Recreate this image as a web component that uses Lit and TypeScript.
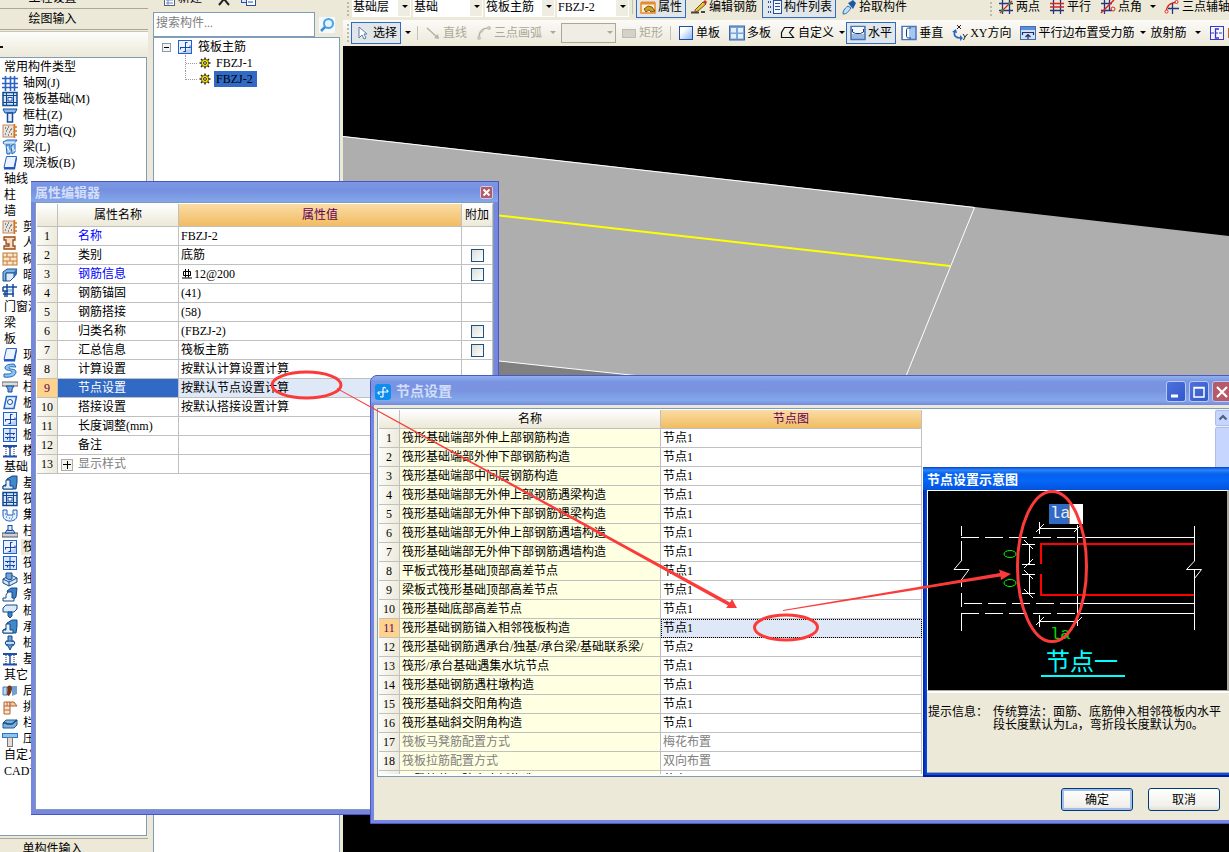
import { LitElement, html, svg, css, nothing } from "lit";
import { customElement, property } from "lit/decorators.js";
import { classMap } from "lit/directives/class-map.js";

/* 16x16 glyphs used by the toolbars and the component trees. */
const ICONS: Record<string, unknown> = {
  grid: svg`<path d="M0 3.500h16M0 8.500h16M0 12.500h16M3.500 1v15M8.500 1v15M12.500 1v15" stroke="#2a63c4" stroke-width="1.600" fill="none"/>`,
  raft: svg`<rect x="1" y="1.500" width="14" height="13" fill="#d6e6fa" stroke="#10488e" stroke-width="1.500"/><path d="M1 4.500h14M1 11.500h14M4.500 2v13M11.500 2v13" stroke="#10488e"/><rect x="6" y="6.500" width="4" height="3.500" fill="#fff" stroke="#1c4fb0"/>`,
  column: svg`<path d="M1 2h14l-2 4H3z" fill="#8db9ee" stroke="#164a9e"/><path d="M5.500 6h5v9h-5z" fill="#e6f1ff" stroke="#164a9e" stroke-width="1.500"/>`,
  wall: svg`<rect x="1" y="2" width="11" height="12" fill="#e6e2de" stroke="#c98a5c"/><path d="M3 5h1M6 4h1M9 6h1M4 8h1M7 9h1M3 11h1M9 11h1M6 12h1M5 6h1M8 7h1" stroke="#333"/><path d="M12.500 1v14M12 4h3M12 8h3M12 12h3" stroke="#d8741c" stroke-width="1.500"/>`,
  beam: svg`<path d="M1 3l4-2h10l-3 4H2zM4 6l4 0v9H5zM9 7l4-3v9l-3 2z" fill="#a9cdf5" stroke="#1d69ba"/><path d="M2 4l12 0M5 8l3 5M10 8l3 4" stroke="#fff"/>`,
  slab: svg`<path d="M4.500 1.500h10l-2.500 11h-10z" fill="#eaf3ff" stroke="#2a66c8"/><path d="M2 12.500h10l2.500-11 .5 2-2 11H2z" fill="#1d55b8"/>`,
  frame: svg`<path d="M2 2h11v3h-2v6h2v3H2v-3h5V9H4V5H2z" fill="#f5dfca" stroke="#9c4a12" stroke-width="1.300"/>`,
  brick: svg`<rect x="1" y="2" width="14" height="12" fill="#fbe5cd" stroke="#c47a35"/><path d="M1 6h14M1 10h14M5 2v4M11 2v4M8 6v4M5 10v4M11 10v4" stroke="#c47a35"/>`,
  hidden: svg`<path d="M1 5l4-3h10l-3 4H4v8H1z" fill="#7fb2e6" stroke="#1b528e"/><path d="M4 6h8v4l-4 4H4z" fill="#dcecfb" stroke="#1b528e"/><path d="M12 6l3-4v5l-3 4z" fill="#2d6db2"/>`,
  tie: svg`<path d="M1 4h14M1 11h11M5 1v13M11 1v13M1 4v4h9M3 14V8" stroke="#174a9b" stroke-width="1.500" fill="none"/><path d="M6 6h4v3H6z" fill="#9ccaf2"/>`,
  spiral: svg`<path d="M12 1C7 1 3 2 3 5s7 2 7 4-4 2-8 2v3c6 1 12-1 12-5S7 7 7 5s3-1 7-1z" fill="#8fc3ee" stroke="#1d69b8"/>`,
  cap: svg`<path d="M0 3h16v4H0z" fill="#ddd" stroke="#666"/><path d="M4 7h8l-2 3v3H6v-3z" fill="#6ea7e4" stroke="#174a9b"/>`,
  hole: svg`<path d="M4.500 1.500h10l-2.500 12h-10z" fill="#e1eefc" stroke="#2a66c8" stroke-width="1.500"/><circle cx="8" cy="7" r="2.500" fill="#fff" stroke="#174a9b"/>`,
  rebar: svg`<rect x="1.500" y="1.500" width="13" height="13" fill="#eaf2ff" stroke="#1f5fd0"/><path d="M14 9v5H2z" fill="#b8d0f4"/><path d="M3 8.500h10.500M8.500 3v10M8.500 3.500h2M6.500 12.500h2M3.500 8v2.500M13 9V6.500" stroke="#1546a8" fill="none"/>`,
  neg: svg`<rect x="1.500" y="1.500" width="13" height="13" fill="#d8e7fb" stroke="#1f5fd0"/><path d="M8 2v12.500M3 6.500h10M3 10.500h10M5.500 6v2M11.500 6v2M5.500 10.500v2M11.500 10.500v2" stroke="#1546a8" fill="none"/>`,
  band: svg`<path d="M1 3h14M1 13.500h14" stroke="#1c4fb0" stroke-width="2"/><path d="M4 4v9M12 4v9" stroke="#222" stroke-dasharray="1 1"/><path d="M8 4v9M6 4h4" stroke="#1c4fb0" stroke-width="1.500"/>`,
  found: svg`<path d="M1 14V11l4-2V4l5-3h5v6l-1 7z" fill="#4287c9" stroke="#124a86"/><path d="M1 14v-3h3V5h4v6h3v3z" fill="#e4f1fd" stroke="#124a86"/>`,
  pit: svg`<path d="M1 3h4v5h6V3h4v5c0 4-3 6-7 6S1 12 1 8z" fill="#e3f0ff" stroke="#1d5ac0"/><path d="M3 7h1M4 10h1M7 11h1M10 10h1M12 7h1M9 12h1" stroke="#1d5ac0"/>`,
  pier: svg`<path d="M0 10h16v4H0z" fill="#cfcfcf" stroke="#555"/><path d="M3 10l2-3h6l2 3z" fill="#b6d4f4" stroke="#174a9b"/><rect x="6" y="2.500" width="4" height="5" fill="#dcebfb" stroke="#174a9b"/>`,
  pad: svg`<path d="M1 8l8-4 6 3v4l-8 4-6-3z" fill="#d5e8fa" stroke="#174a86"/><path d="M1 8l6 3 8-4M7 11v4" stroke="#174a86" fill="none"/><path d="M4 2h6v6l-3 1-3-2z" fill="#6ea4dc" stroke="#174a86"/>`,
  strip: svg`<path d="M5 4l4-3h6l-1 9-4 4z" fill="#3b7fc4" stroke="#124a86"/><path d="M1 14v-3h3V8l2-3h4v6h2v3z" fill="#f0f7ff" stroke="#124a86"/>`,
  pilecap: svg`<path d="M1 5l3-3h11v4l-3 3H1z" fill="#d9e9f9" stroke="#174a86"/><path d="M6 9h4v4l-2 2-2-2z" fill="#3c83cc" stroke="#174a86"/>`,
  pile: svg`<path d="M6 1h4v5h2v4l-2 1-2 4-2-4-2-1V6h2z" fill="#6aa1da" stroke="#174a86"/><ellipse cx="8" cy="8" rx="5" ry="2" fill="#bcd9f5" stroke="#174a86"/>`,
  post: svg`<path d="M1 4h4v8H1z" fill="#b9d5f0" stroke="#4d7fb4"/><path d="M5 4c2-2 5-2 5 1s-1 5-3 8l-2-1c0-3 1-5 0-8z" fill="#743715"/><path d="M10 3h5v8l-5 2z" fill="#6fa0d3"/>`,
  eave: svg`<path d="M2 3h6v12H2z" fill="#fbe3cf" stroke="#b5622a"/><path d="M8 3h4l3 4H8zM2 7h6M2 11h6M5 3v4" fill="#ecc5a4" stroke="#b5622a"/>`,
  rail: svg`<path d="M1 8l3-3h11v5l-3 3H1z" fill="#7fb0dc" stroke="#1b5c99"/><path d="M1 8h3l1 1h5l5-4" stroke="#124a80" fill="none" stroke-width="1.500"/>`,
  coping: svg`<rect x="0.500" y="2.500" width="15" height="4" fill="#8cc2f4" stroke="#2577c8"/><rect x="5.500" y="6.500" width="5" height="9" fill="#ddd" stroke="#777"/>`,
  gear: svg`<g stroke="#222" stroke-width="1.500"><path d="M8 2.500v11M2.500 8h11M4 4l8 8M12 4l-8 8"/></g><circle cx="8" cy="8" r="3.700" fill="#ffe600" stroke="#6b5f00"/><circle cx="8" cy="8" r="1.400" fill="#fff" stroke="#222"/>`,
  search: svg`<rect width="16" height="16" fill="#f4f9fd"/><circle cx="9.500" cy="6.500" r="4.500" fill="#e2f4ff" stroke="#4aa3e2" stroke-width="2"/><path d="M6 10l-4 4" stroke="#3f8fd0" stroke-width="2.500"/>`,
  sheet: svg`<rect x="3.500" y="0.500" width="10" height="15" fill="#fff" stroke="#555f80"/><path d="M5 10h7M5 13h7M7 8v7" stroke="#6a87c0"/>`,
  cross: svg`<path d="M3 3l10 12M13 3L3 15" stroke="#222" stroke-width="2"/>`,
  copy: svg`<rect x="1.500" y="3.500" width="8" height="9" fill="#dbe8fb" stroke="#2b4fa0"/><rect x="6.500" y="6.500" width="9" height="9" fill="#fff" stroke="#2b4fa0"/><path d="M8 9h5M8 12h5" stroke="#2b4fa0"/>`,
  props: svg`<rect x="1" y="4" width="14" height="10" fill="#fff1d6" stroke="#e8892b" stroke-width="1.500"/><path d="M1 4h14" stroke="#e8892b" stroke-width="3"/><path d="M4 10l4-3 4 1 3 4-4 1-2-2-3 2z" fill="#d2a01e" stroke="#553d05" stroke-width=".8"/>`,
  pencil: svg`<path d="M0 13.500h8M10 13h4" stroke="#444" stroke-width="2"/><path d="M4 11l8-8 3 2-8 7-3 1z" fill="#e8c33c" stroke="#6d5312"/><path d="M12 3l2-2 2 2-1 2z" fill="#c8311d"/>`,
  list: svg`<path d="M2 3h3M2 8h3M2 13h3" stroke="#2b4fa0" stroke-width="2" stroke-dasharray="1 1"/><rect x="7.500" y="1.500" width="8" height="13" fill="#f5f8ff" stroke="#2b4fa0"/><path d="M9 4.500h5M9 7.500h5M9 10.500h5" stroke="#2b4fa0"/>`,
  picker: svg`<path d="M2 15c0-3 1-5 5-8l3 2c-3 4-4 6-8 6z" fill="#bde0fa" stroke="#2a68a8"/><path d="M7 4l5 6 1-2 2-4-3-3-3 2z" fill="#195aa6"/>`,
  axis2: svg`<path d="M1 4.500h14M1 11.500h14M4.500 1v14M11.500 1v14" stroke="#26367e" stroke-width="1.300"/><path d="M2 14L14 2" stroke="#d22" stroke-width="1.300"/><circle cx="4.500" cy="11.500" r="1.500" fill="#3b8c2f"/><circle cx="11.500" cy="4.500" r="1.500" fill="#3b8c2f"/>`,
  axisP: svg`<path d="M4.500 1v14M11.500 1v14M1 11.500h14" stroke="#26367e" stroke-width="1.300"/><path d="M1 4.500h14M1 8h14" stroke="#d22" stroke-width="1.300"/>`,
  axisA: svg`<path d="M1 4.500h11M1 11.500h11M4.500 1v14M9.500 1v10" stroke="#26367e" stroke-width="1.300"/><path d="M1 14L14 1" stroke="#d22" stroke-width="1.500"/><circle cx="13" cy="10" r="2" fill="none" stroke="#d22"/>`,
  axis3: svg`<path d="M2 13C3 6 6 4 13 3" stroke="#d22" fill="none" stroke-width="1.300"/><path d="M8.500 4v11M4 9.500h11" stroke="#26367e" stroke-width="1.300"/><circle cx="2.500" cy="12.500" r="1.500" fill="#fff" stroke="#d22"/><circle cx="12.500" cy="3" r="1.500" fill="#fff" stroke="#d22"/>`,
  cursor: svg`<path d="M4 2v11l3-3 2 4 2-1-2-4h3z" fill="#fff" stroke="#5c7ca8"/>`,
  line: svg`<path d="M2 3l10 9" stroke="#b6b3a6" stroke-width="1.500"/><path d="M14 14l-5-1 4-4z" fill="#b6b3a6"/>`,
  arc: svg`<path d="M3 13C3 7 6 3 13 3" stroke="#b6b3a6" fill="none" stroke-width="1.500"/><circle cx="3" cy="13" r="2" fill="#c9c6ba"/><circle cx="13" cy="3" r="2" fill="#c9c6ba"/><circle cx="6" cy="6" r="1.500" fill="#c9c6ba"/>`,
  rect: svg`<rect x="1.500" y="4.500" width="13" height="8" fill="#d4d2c8" stroke="#c0bdb0"/>`,
  single: svg`<defs><linearGradient id="s" x2="1" y2="1"><stop offset=".3" stop-color="#fff"/><stop offset="1" stop-color="#7fb0f8"/></linearGradient></defs><rect x="1.500" y="1.500" width="13" height="13" fill="url(#s)" stroke="#1f4fa6"/>`,
  multi: svg`<rect x="0.500" y="1" width="15" height="14" fill="#7da6d6" stroke="#3c6aa4"/><path d="M2 3h5v4.500H2zM9 3h5v4.500H9zM2 9h5v4.500H2zM9 9h5v4.500H9z" fill="#e3f0fc"/>`,
  poly: svg`<path d="M1.500 12.500v-5l3-5h9l-4 5 4 5z" fill="none" stroke="#111" stroke-width="1.200"/>`,
  horiz: svg`<rect x="1" y="1.500" width="14" height="13" fill="#9cbce8" stroke="#4b76b8" stroke-width="1.500"/><rect x="2" y="2" width="12" height="7" fill="#f4f8fd"/><path d="M2.500 4v3l3 1.500h5l3-1.500V4" stroke="#223c70" fill="none"/>`,
  vert: svg`<rect x="1" y="1.500" width="14" height="13" fill="#a6c6f0" stroke="#4b76b8" stroke-width="1.500"/><rect x="2" y="2" width="6" height="12" fill="#f8fbff"/><path d="M10 3C6 3 5.500 3 5.500 6v4c0 3 .5 3 4.500 3" stroke="#1a3a7a" fill="none"/>`,
  xy: svg`<path d="M5 0l4 4M9 0L5 4M11 9l2 3L15.500 9M13 12l-1.500 3" stroke="#222" fill="none"/><path d="M3 6C1 11 4 13 9 13" fill="none" stroke="#2a66c8" stroke-width="1.700"/><path d="M0 7l4-3 1 4zM8 10l3 3-3 3z" fill="#2a66c8"/>`,
  edge: svg`<rect x="0.500" y="1.500" width="15" height="13" fill="#cfe0f7" stroke="#3f6fb8"/><rect x="1" y="2" width="14" height="3" fill="#5c8fd8"/><path d="M2.500 10V7.500h11V10M8 14V10M5.500 12L8 9.500l2.500 2.500" stroke="#222f66" fill="none" stroke-width="1.200"/>`,
  auto: svg`<rect x="1.500" y="1.500" width="13" height="13" fill="#f5f4ff" stroke="#3a36c8"/><path d="M2 8h12" stroke="#3a36c8" stroke-dasharray="3 1"/><path d="M10 4H6.500v9H10" stroke="#3a36c8" fill="none" stroke-width="1.300"/>`,
};

const icon = (name: string) => svg`<svg class="icon" viewBox="0 0 16 16" width="16" height="16" aria-hidden="true">${ICONS[name]}</svg>`;
const caret = (off = false) => html`<svg class="caret" viewBox="0 0 12 6" width="12" height="6" aria-hidden="true"><path d="M3 1h6L6 4z" fill=${off ? "#aca899" : "#000"} /></svg>`;

const base = css`
  :host { font: 12px/16px "Liberation Serif", "Noto Sans CJK SC", serif; color: #000; }
  * { box-sizing: border-box; }
  button, input, select { font: inherit; color: inherit; margin: 0; border-radius: 0; }
  .icon, .caret { display: block; flex: none; }
`;

const gridStyles = css`
  table { border-collapse: separate; border-spacing: 0; table-layout: fixed; }
  th, td { padding: 0; font-weight: normal; border: solid #c0c0c0; border-width: 0 1px 1px 0; overflow: hidden; white-space: nowrap; }
  tr { height: 19px; }
  th { background: linear-gradient(#fff, #f3f1e7 60%, #ece9d8); text-align: center; }
  tbody th { background: linear-gradient(100deg, #fdfdfb, #ece9d8); }
  th.hot { background: linear-gradient(#fadca4, #f1bc62); color: #600060; }
  tbody th.hot { background: #ffd38c; }
  td { padding-left: 2px; background: #fff; line-height: 17px; }
`;

/* ---------- Toolbars ---------- */
interface Tool { t: "btn" | "combo" | "sep" | "grip" | "caret" | "space"; icon?: string; label?: string; on?: boolean; off?: boolean; tight?: boolean; size?: string; name?: string; }

const TOP_TOOLS: Tool[] = [
  { t: "grip" },
  { t: "combo", label: "基础层", size: "s", name: "楼层" },
  { t: "combo", label: "基础", size: "m", name: "构件大类" },
  { t: "combo", label: "筏板主筋", size: "m", name: "构件类型" },
  { t: "combo", label: "FBZJ-2", size: "l", name: "构件" },
  { t: "sep" },
  { t: "btn", icon: "props", label: "属性", on: true },
  { t: "btn", icon: "pencil", label: "编辑钢筋" },
  { t: "btn", icon: "list", label: "构件列表", on: true },
  { t: "btn", icon: "picker", label: "拾取构件" },
  { t: "space" },
  { t: "grip" },
  { t: "btn", icon: "axis2", label: "两点" },
  { t: "btn", icon: "axisP", label: "平行" },
  { t: "btn", icon: "axisA", label: "点角" },
  { t: "caret" },
  { t: "btn", icon: "axis3", label: "三点辅轴" },
];

const DRAW_TOOLS: Tool[] = [
  { t: "grip" },
  { t: "btn", icon: "cursor", label: "选择", on: true },
  { t: "caret" },
  { t: "sep" },
  { t: "btn", icon: "line", label: "直线", off: true },
  { t: "btn", icon: "arc", label: "三点画弧", off: true },
  { t: "caret", off: true },
  { t: "combo", label: "", size: "x", off: true, name: "画弧方式" },
  { t: "btn", icon: "rect", label: "矩形", off: true },
  { t: "sep" },
  { t: "btn", icon: "single", label: "单板" },
  { t: "btn", icon: "multi", label: "多板" },
  { t: "btn", icon: "poly", label: "自定义" },
  { t: "caret", tight: true },
  { t: "btn", icon: "horiz", label: "水平", on: true },
  { t: "btn", icon: "vert", label: "垂直" },
  { t: "btn", icon: "xy", label: "XY方向" },
  { t: "btn", icon: "edge", label: "平行边布置受力筋" },
  { t: "caret", tight: true },
  { t: "btn", label: "放射筋" },
  { t: "caret" },
  { t: "btn", icon: "auto", label: "自动配筋" },
];

@customElement("tool-strip")
class ToolStrip extends LitElement {
  @property({ attribute: false }) tools: Tool[] = [];
  static styles = [base, css`
    :host { display: flex; gap: 1px; overflow: hidden; padding: 0 0 2px 4px; align-items: flex-end; background: linear-gradient(#fcfbf8, #f3f1e8 50%, #ece9d8); }
    .tool { flex: none; display: flex; align-items: center; gap: 2px; height: 22px; padding: 0 3px; border: 1px solid transparent; background: none; white-space: nowrap; }
    .tool.on { border-color: #316ac5; background: #e1e6e8; }
    .tool:disabled { color: #aca899; }
    .drop { flex: none; display: flex; align-items: center; justify-content: center; height: 22px; width: 12px; padding: 0; border: 0; background: none; }
    .drop.tight { margin: 0 -3px; }
    .sep { flex: none; width: 1px; height: 14px; margin: 4px 2px; background: #c5c2b2; }
    .grip { flex: none; width: 2px; height: 18px; margin: 2px 1px 2px 0; background: repeating-linear-gradient(#bdb9a8 0 2px, transparent 2px 4px); }
    .space { flex: none; width: 77px; height: 22px; }
    .combo { flex: none; position: relative; height: 20px; width: 70px; margin: 0 0 1px 1px; }
    .combo.s { width: 59px; }
    .combo.l { width: 72px; }
    .combo.x { width: 55px; }
    .combo select { appearance: none; width: 100%; height: 100%; padding: 0 12px 0 0; border: 1px solid #fff; background: linear-gradient(to left, #efede2 12px, #fff 12px); }
    .combo.x select { border-color: #aca899; background: #f0eee4; opacity: 1; }
    .combo .caret { position: absolute; right: 0; top: 7px; pointer-events: none; }
  `];
  render() {
    return this.tools.map((x) => {
      switch (x.t) {
        case "btn": return html`<button class=${classMap({ tool: true, on: !!x.on })} ?disabled=${!!x.off}>${x.icon ? icon(x.icon) : nothing}<span>${x.label}</span></button>`;
        case "caret": return html`<button class=${classMap({ drop: true, tight: !!x.tight })} aria-label="更多" ?disabled=${!!x.off}>${caret(x.off)}</button>`;
        case "combo": return html`<label class="combo ${x.size}"><select aria-label=${x.name} ?disabled=${!!x.off}><option>${x.label}</option></select>${caret(x.off)}</label>`;
        default: return html`<span class=${x.t}></span>`;
      }
    });
  }
}

/* ---------- Left navigation ---------- */
const NAV: [string, string?][] = [
  ["常用构件类型"], ["轴网(J)", "grid"], ["筏板基础(M)", "raft"], ["框柱(Z)", "column"], ["剪力墙(Q)", "wall"], ["梁(L)", "beam"], ["现浇板(B)", "slab"],
  ["轴线"], ["柱"], ["墙"], ["剪力墙(Q)", "wall"], ["人防门框墙(RF)", "frame"], ["砌体墙(Q)", "brick"], ["暗梁(A)", "hidden"], ["砌体加筋(Y)", "tie"],
  ["门窗洞"], ["梁"], ["板"], ["现浇板(B)", "slab"], ["螺旋板(B)", "spiral"], ["柱帽(V)", "cap"], ["板洞(N)", "hole"], ["板受力筋(S)", "rebar"], ["板负筋(F)", "neg"], ["楼层板带(H)", "band"],
  ["基础"], ["基础梁(F)", "found"], ["筏板基础(M)", "raft"], ["集水坑(K)", "pit"], ["柱墩(Y)", "pier"], ["筏板主筋(R)", "rebar"], ["筏板负筋(X)", "neg"], ["独立基础(P)", "pad"], ["条形基础(T)", "strip"], ["桩承台(V)", "pilecap"], ["承台梁(F)", "found"], ["桩(U)", "pile"], ["基础板带(W)", "band"],
  ["其它"], ["后浇带(JD)", "post"], ["挑檐(T)", "eave"], ["栏板(K)", "rail"], ["压顶(YD)", "coping"], ["自定义"], ["CAD识别"],
];

@customElement("module-nav")
class ModuleNav extends LitElement {
  static styles = [base, css`
    :host { display: flex; flex-direction: column; background: #ece9d8; overflow: hidden; }
    .clip { flex: none; display: flex; align-items: flex-end; overflow: hidden; height: 9px; }
    .foot { align-items: flex-start; height: 14px; margin-top: 2px; }
    .section { flex: none; width: 100%; height: 21px; padding: 0 43px 0 0; border: 0; border-bottom: 1px solid #aca899; background: #ece9d8; }
    .foot .section { border-top: 1px solid #aca899; }
    .strip { flex: none; height: 26px; margin-top: 1px; background: linear-gradient(#fdfdfb, #ece9d8); border-top: 1px solid #c8c5b4; display: flex; align-items: center; }
    .strip i { width: 3px; height: 2px; background: #111; margin-top: 4px; }
    ul { flex: 1; min-height: 0; overflow: hidden; margin: 0 1px 0 0; padding: 1px 0 0; list-style: none; background: #fff; border: solid #7f9db9; border-width: 1px 1px 1px 0; }
    li { display: flex; align-items: center; gap: 3px; height: 16px; padding-left: 4px; white-space: nowrap; }
    li.leaf { padding-left: 2px; }
    li span { padding: 0 2px; }
    li.group span { padding: 0; }
    li.now span { background: #ece9d8; }
  `];
  render() {
    return html`
      <div class="clip"><button class="section">工程设置</button></div>
      <button class="section">绘图输入</button>
      <div class="strip"><i></i></div>
      <ul>${NAV.map(([name, ic], i) => html`<li class=${classMap({ leaf: !!ic, group: !ic, now: i === 30 })}>${ic ? icon(ic) : nothing}<span>${name}</span></li>`)}</ul>
      <div class="clip foot"><button class="section">单构件输入</button></div>`;
  }
}

/* ---------- Component list ---------- */
@customElement("component-list")
class ComponentList extends LitElement {
  static styles = [base, css`
    :host { display: flex; flex-direction: column; background: #ece9d8; overflow: hidden; }
    .bar { flex: none; display: flex; align-items: flex-end; height: 12px; overflow: hidden; padding: 0 0 3px 8px; }
    .bar button { flex: none; display: flex; align-items: center; height: 22px; gap: 1px; padding: 0; margin-right: 14px; border: 0; background: none; }
    .bar button + button { margin-right: 8px; }
    .find { flex: none; display: flex; height: 25px; }
    .find input { flex: 1; min-width: 0; border: 1px solid #7f9db9; background: #fff; padding: 0 2px 3px; }
    .find input::placeholder { color: #808080; opacity: 1; }
    .find button { width: 25px; padding: 0 0 0 4px; border: 0; background: none; }
    .tree { flex: 1; border: 1px solid #7f9db9; border-bottom: 0; background: #fff; padding: 1px 0 0 8px; }
    .row { display: flex; align-items: center; height: 16px; }
    .row .icon { margin-right: 5px; }
    .fold { display: block; width: 9px; height: 9px; padding: 0; margin-right: 6px; border: 1px solid #7f9db9; background: linear-gradient(#000, #000) center / 5px 1px no-repeat #f5f3ea; }
    .kids { margin-left: 23px; }
    .kids .row::before { content: ""; width: 11px; height: 16px; border-left: 1px dotted #999; background: repeating-linear-gradient(90deg, #999 0 1px, transparent 1px 2px) 0 8px / 100% 1px no-repeat; }
    .kids .row:last-child::before { height: 9px; align-self: flex-start; }
    .kids .row .icon { margin-right: 1px; }
    .name { padding: 0 4px 0 2px; }
    .name.on { background: #316ac5; }
  `];
  render() {
    return html`
      <div class="bar"><button>${icon("sheet")}新建</button><button aria-label="删除">${icon("cross")}</button><button aria-label="复制">${icon("copy")}</button></div>
      <div class="find"><input aria-label="搜索构件" placeholder="搜索构件..." /><button aria-label="搜索">${icon("search")}</button></div>
      <div class="tree">
        <div class="row"><button class="fold" aria-label="折叠"></button>${icon("rebar")}<span>筏板主筋</span></div>
        <div class="kids">
          <div class="row">${icon("gear")}<span class="name">FBZJ-1</span></div>
          <div class="row">${icon("gear")}<span class="name on">FBZJ-2</span></div>
        </div>
      </div>`;
  }
}

/* ---------- Property editor ---------- */
const rebarMark = html`<svg class="mark" viewBox="0 0 10 10" width="10" height="10" aria-hidden="true"><path d="M1.500 2.500h7v4h-7zM3.500 0v8.500M6.500 0v8.500M0 9h10" fill="none" stroke="#000" /></svg>`;
const PROPS: { n: string; v: unknown; c?: "blue" | "grey"; box?: boolean }[] = [
  { n: "名称", v: "FBZJ-2", c: "blue" },
  { n: "类别", v: "底筋", box: true },
  { n: "钢筋信息", v: html`${rebarMark}12@200`, c: "blue", box: true },
  { n: "钢筋锚固", v: "(41)" },
  { n: "钢筋搭接", v: "(58)" },
  { n: "归类名称", v: "(FBZJ-2)", box: true },
  { n: "汇总信息", v: "筏板主筋", box: true },
  { n: "计算设置", v: "按默认计算设置计算" },
  { n: "节点设置", v: "按默认节点设置计算" },
  { n: "搭接设置", v: "按默认搭接设置计算" },
  { n: "长度调整(mm)", v: "" },
  { n: "备注", v: "" },
  { n: "显示样式", v: "", c: "grey" },
];

@customElement("property-editor")
class PropertyEditor extends LitElement {
  static styles = [base, gridStyles, css`
    :host { display: flex; flex-direction: column; padding: 0 4px 4px; border: 1px solid #4a54c4; border-width: 1px 1px 1px 0; background: #7587de; }
    header { flex: none; display: flex; align-items: center; justify-content: space-between; height: 20px; margin: 0 -4px; padding: 1px 5px 0 4px; font-size: 13px; font-weight: bold; color: #d3defa; background: linear-gradient(#7b98e4, #7690e0 40%, #83a6ea); }
    .x { display: block; width: 13px; height: 13px; padding: 0; border: 1px solid #d9c6d6; border-radius: 2px; background: #b35a6a; }
    .x svg { display: block; }
    .sheet { flex: 1; min-height: 0; overflow: hidden; padding: 1px 1px 0; background: #fff; border: 1px solid #7f9db9; }
    table { width: 456px; }
    thead tr { height: 23px; }
    .c-no { width: 21px; } .c-name { width: 121px; } .c-add { width: 31px; }
    .name { padding-left: 20px; }
    .blue { color: #00f; } .grey { color: #808080; }
    .on td { background: #dfe8f6; }
    .on .name { background: #316ac5; color: #fff; }
    .name.grey { padding-left: 3px; }
    .plus { width: 12px; height: 12px; padding: 0; margin-right: 5px; vertical-align: middle; border: 1px solid #b0ada0; background: linear-gradient(#000, #000) center / 8px 1px no-repeat, linear-gradient(#000, #000) center / 1px 8px no-repeat, #f3f3ef; }
    .mark { margin: 0 2px 0 1px; vertical-align: -1px; }
    .add { padding: 0; }
    input { display: block; appearance: none; width: 13px; height: 13px; margin: 0 auto; border: 1px solid #1c5180; background: linear-gradient(135deg, #dcdcd7, #fff); }
  `];
  render() {
    return html`
      <header><span>属性编辑器</span><button class="x" aria-label="关闭"><svg viewBox="0 0 11 11" width="11" height="11"><path d="M2.500 2.500l6 6M8.500 2.500l-6 6" stroke="#fff" stroke-width="2" /></svg></button></header>
      <div class="sheet"><table>
        <colgroup><col class="c-no" /><col class="c-name" /><col /><col class="c-add" /></colgroup>
        <thead><tr><th></th><th>属性名称</th><th class="hot">属性值</th><th>附加</th></tr></thead>
        <tbody>${PROPS.map((p, i) => html`<tr class=${i === 8 ? "on" : ""}>
          <th class=${i === 8 ? "hot" : ""}>${i + 1}</th>
          <td class="name ${p.c ?? ""}">${p.c === "grey" ? html`<button class="plus" aria-label="展开"></button>` : nothing}${p.n}</td>
          <td>${p.v}</td>
          <td class="add">${p.box ? html`<input type="checkbox" aria-label="附加${p.n}" />` : nothing}</td>
        </tr>`)}</tbody>
      </table></div>`;
  }
}

/* ---------- Node settings ---------- */
const NODES: [string, string][] = [
  ["筏形基础端部外伸上部钢筋构造", "节点1"], ["筏形基础端部外伸下部钢筋构造", "节点1"], ["筏形基础端部中间层钢筋构造", "节点1"],
  ["筏形基础端部无外伸上部钢筋遇梁构造", "节点1"], ["筏形基础端部无外伸下部钢筋遇梁构造", "节点1"], ["筏形基础端部无外伸上部钢筋遇墙构造", "节点1"], ["筏形基础端部无外伸下部钢筋遇墙构造", "节点1"],
  ["平板式筏形基础顶部高差节点", "节点1"], ["梁板式筏形基础顶部高差节点", "节点1"], ["筏形基础底部高差节点", "节点1"], ["筏形基础钢筋锚入相邻筏板构造", "节点1"],
  ["筏形基础钢筋遇承台/独基/承台梁/基础联系梁/", "节点2"], ["筏形/承台基础遇集水坑节点", "节点1"], ["筏形基础钢筋遇柱墩构造", "节点1"], ["筏形基础斜交阳角构造", "节点1"], ["筏形基础斜交阴角构造", "节点1"],
  ["筏板马凳筋配置方式", "梅花布置"], ["筏板拉筋配置方式", "双向布置"], ["马凳筋伸入防水底板构造", "节点1"],
];

@customElement("node-dialog")
class NodeDialog extends LitElement {
  static styles = [base, gridStyles, css`
    :host { display: flex; flex-direction: column; padding: 0 3px 3px; border: 1px solid #4d57c6; border-radius: 7px 7px 0 0; background: #7587de; overflow: hidden; }
    header { flex: none; display: flex; align-items: center; gap: 5px; height: 29px; margin: 0 -3px; padding: 2px 7px 0 4px; font-size: 14px; font-weight: bold; color: #d3defa; background: linear-gradient(#8fb0ee, #7a94e2 20%, #7993e1 50%, #83a8ea 85%, #7587de); }
    header span { flex: 1; }
    .box { display: block; width: 20px; height: 21px; padding: 0; border: 1px solid #b9c9f3; border-radius: 3px; background: linear-gradient(135deg, #4c72dc, #3358cc); margin-left: -2px; }
    .box.x { background: #b45a68; }
    .box svg { display: block; margin: auto; }
    .body { flex: 1; min-height: 0; display: flex; flex-direction: column; padding: 3px 3px 0; background: #ece9d8; }
    .pane { flex: 1; min-height: 0; display: flex; justify-content: space-between; overflow: hidden; border: 1px solid #7f9db9; background: #fff; }
    .scroll { overflow: hidden; margin: 1px 1px 2px; }
    table { width: 543px; }
    .c-no { width: 21px; } .c-name { width: 261px; }
    .name { background: #ffffe1; }
    .grey { color: #808080; }
    .sel { background: #dfe8f6; outline: 1px dotted #000; outline-offset: -1px; }
    .track { width: 17px; background: #f3f1ec; padding-top: 1px; }
    .track button { display: block; width: 16px; border: 1px solid #a9bdf0; border-radius: 2px; padding: 0; background: #c6d5fd; }
    .up { height: 16px; } .thumb { height: 180px; margin-top: 1px; }
    footer { flex: none; display: flex; justify-content: flex-end; gap: 15px; height: 43px; padding: 11px 13px 0; }
    footer button { width: 72px; height: 23px; padding: 0; border: 1px solid #003c74; border-radius: 3px; background: linear-gradient(#fff, #f1f0ea 80%, #e2dfd6); }
    footer .ok { box-shadow: inset 0 0 0 2px #a3bdf0; }
  `];
  render() {
    return html`
      <header>
        <svg viewBox="0 0 16 16" width="16" height="16" aria-hidden="true"><rect width="16" height="16" rx="3" fill="#0d8df0" /><path d="M3 8h10M8 4v9M8 4.500c0-1.500 2.500-1.500 2.500 0M8 12c0 1.500-2.500 1.500-2.500 0M3 8c0 2 1.500 2 2 2M13 8c0-2-1.500-2-2-2" stroke="#fff" fill="none" stroke-width="1.200" /></svg>
        <span>节点设置</span>
        <button class="box" aria-label="最小化"><svg viewBox="0 0 16 16" width="16" height="16"><path d="M3 12h7" stroke="#fff" stroke-width="3" /></svg></button>
        <button class="box" aria-label="最大化"><svg viewBox="0 0 16 16" width="16" height="16"><path d="M3 3.500h10v9.500H3zM3 4h10" fill="none" stroke="#fff" stroke-width="1.500" /></svg></button>
        <button class="box x" aria-label="关闭"><svg viewBox="0 0 16 16" width="16" height="16"><path d="M3 3l10 10M13 3L3 13" stroke="#fff" stroke-width="2.200" /></svg></button>
      </header>
      <div class="body">
        <div class="pane">
          <div class="scroll"><table>
            <colgroup><col class="c-no" /><col class="c-name" /><col /></colgroup>
            <thead><tr><th></th><th>名称</th><th class="hot">节点图</th></tr></thead>
            <tbody>${NODES.map(([n, v], i) => { const g = i === 16 || i === 17; return html`<tr>
              <th class=${i === 10 ? "hot" : ""}>${i + 1}</th>
              <td class=${classMap({ name: true, grey: g })}>${n}</td>
              <td class=${classMap({ grey: g, sel: i === 10 })}>${v}</td></tr>`; })}</tbody>
          </table></div>
          <div class="track"><button class="up" aria-label="向上滚动"><svg viewBox="0 0 14 14" width="14" height="14"><path d="M3.500 8.500L7 5l3.500 3.500" fill="none" stroke="#4d6185" stroke-width="2.200" /></svg></button><button class="thumb" aria-label="滚动条"></button></div>
        </div>
        <footer><button class="ok">确定</button><button>取消</button></footer>
      </div>`;
  }
}

/* ---------- Node preview ---------- */
@customElement("node-preview")
class NodePreview extends LitElement {
  static styles = [base, css`
    :host { display: flex; flex-direction: column; padding: 0 4px 4px; background: linear-gradient(90deg, #001ea0, #0a50e6 4px, #0a50e6 calc(100% - 4px), #001ea0); box-shadow: inset 0 -2px #001c9c; }
    header { flex: none; height: 23px; margin: 0 -4px; padding: 5px 4px 0; font-size: 13px; font-weight: bold; color: #fff; background: linear-gradient(#0a3fcc, #2a86f8 3px, #0560ee 7px, #0566f6 60%, #0452de); }
    .stage { flex: 1; min-height: 0; position: relative; overflow: hidden; background: #000; border: 1px solid #fff; border-right: 2px solid #aca899; border-bottom: 1px solid #aca899; }
    .stage svg { position: absolute; left: 0; top: 0; }
    .cad { font-family: "Liberation Mono", "Noto Sans CJK SC", monospace; }
    .stage input { position: absolute; left: 121px; top: 13px; width: 34px; height: 20px; padding: 0 0 0 1px; border: 0; font: 17px/20px "Liberation Mono", monospace; color: #e8eefa; background: linear-gradient(90deg, #316ac5 20px, #d98d3a 20px 21px, #fff 21px); }
    .hint { flex: none; display: flex; gap: 5px; height: 82px; margin: 0; padding: 13px 0 0 1px; border-top: 2px solid #fff; border-bottom: 1px solid #aca899; background: #ece9d8; line-height: 13px; white-space: nowrap; }
    .hint dt { width: 60px; } .hint dd { margin: 0; }
  `];
  render() {
    return html`
      <header>节点设置示意图</header>
      <div class="stage">
        <svg viewBox="928 491 300 200" width="300" height="200" aria-label="节点一">
          <g fill="none" stroke="#fff">
            <path d="M961.500 526v10M961.500 541v19M961.500 579v8M961.500 593v14M961.500 613v18" />
            <path d="M962 560l-8 9.500h15l-7 9.500M1194.500 561l-8 8.500h15l-7 9" />
            <path d="M1194.500 526v35M1194.500 569v61M1077.500 525v101" />
            <path d="M961 537.500h117M964 603.500h114M961 613.500h117" stroke-dasharray="18 6" />
            <path d="M1077 537.500h117M1077 603.500h117M1077 613.500h117" />
            <path d="M1039 528.500h39M1039.500 522v12M1036 532l8-8M1074 532l8-8" />
            <path d="M1039 621.500h39M1039.500 615v12M1036 625l8-8M1074 625l8-8" />
            <path d="M1029.500 544v21M1022 544.500h13M1022 564.500h13M1024 540l9 9M1024 568l9-9" />
            <path d="M1029.500 574v20M1022 574.500h13M1022 593.500h13M1024 570l9 9M1024 589l9 9" />
          </g>
          <path d="M1194 544h-153v20M1041 574v21h153" fill="none" stroke="#f00" stroke-width="2" />
          <g fill="none" stroke="#0f0"><ellipse cx="1010" cy="554" rx="6" ry="3.500" /><ellipse cx="1010" cy="583" rx="6" ry="3.500" /></g>
          <text class="cad" x="1050" y="639" font-size="17" fill="#00d800">la</text>
          <text class="cad" x="1046" y="670" font-size="24" fill="#0ff">节点一</text>
          <path d="M1041 676h84" stroke="#0ff" stroke-width="2" />
        </svg>
        <input aria-label="锚固长度" .value=${"la"} />
      </div>
      <dl class="hint"><dt>提示信息：</dt><dd>传统算法：面筋、底筋伸入相邻筏板内水平<br />段长度默认为La，弯折段长度默认为0。</dd></dl>`;
  }
}

@customElement("app-root")
class AppRoot extends LitElement {
  static styles = [base, css`
    :host { display: grid; grid-template-columns: 148px 187px minmax(0, 1fr); column-gap: 5px; height: 100vh; position: relative; overflow: hidden; background: #ece9d8; }
    main { display: flex; flex-direction: column; min-width: 0; margin-left: -2px; }
    .top { height: 20px; background: #ece9d8; }
    .draw { height: 26px; }
    .scene { flex: 1; position: relative; overflow: hidden; background: #000; }
    .scene svg { position: absolute; left: 0; top: 0; }
    property-editor { position: absolute; left: 31px; top: 181px; width: 468px; height: 634px; }
    node-dialog { position: absolute; left: 370px; right: -11px; top: 375px; height: 449px; }
    node-preview { position: absolute; left: 923px; right: -4px; top: 467px; height: 310px; }
    .notes { position: absolute; left: 0; top: 0; pointer-events: none; }
  `];
  render() {
    return html`
      <module-nav></module-nav>
      <component-list></component-list>
      <main>
        <tool-strip class="top" .tools=${TOP_TOOLS}></tool-strip>
        <tool-strip class="draw" .tools=${DRAW_TOOLS}></tool-strip>
        <div class="scene">
          <svg viewBox="343 46 886 806" width="886" height="806" aria-hidden="true">
            <path d="M343 136L975 207L1229 236V780H343z" fill="#aeaeae" />
            <path d="M343 344L499 361L633 375V780H343z" fill="#808080" />
            <path d="M343 136.500L974.500 207.500L906 376M343 344L499 361L640 376" fill="none" stroke="#fff" />
            <path d="M343 198L950 266" stroke="#ff0" stroke-width="2" />
          </svg>
        </div>
      </main>
      <property-editor></property-editor>
      <node-dialog></node-dialog>
      <node-preview></node-preview>
      <svg class="notes" viewBox="0 0 1229 852" width="1229" height="852" aria-hidden="true">
        <g fill="none" stroke="#fb3b39" stroke-width="3">
          <ellipse cx="306.500" cy="385" rx="34.500" ry="13" />
          <ellipse cx="786" cy="627.500" rx="31.500" ry="12.500" />
          <ellipse cx="1052" cy="566.500" rx="34.500" ry="75" />
        </g>
        <g fill="#fb3b39">
          <path d="M337 388L730 602.500L732 599L737 608L726 608L728 605.500L337 389z" />
          <path d="M783 610L1000 573L999 569.500L1011 574L1001 580L1000.500 576.500L783 611z" />
        </g>
      </svg>`;
  }
}
